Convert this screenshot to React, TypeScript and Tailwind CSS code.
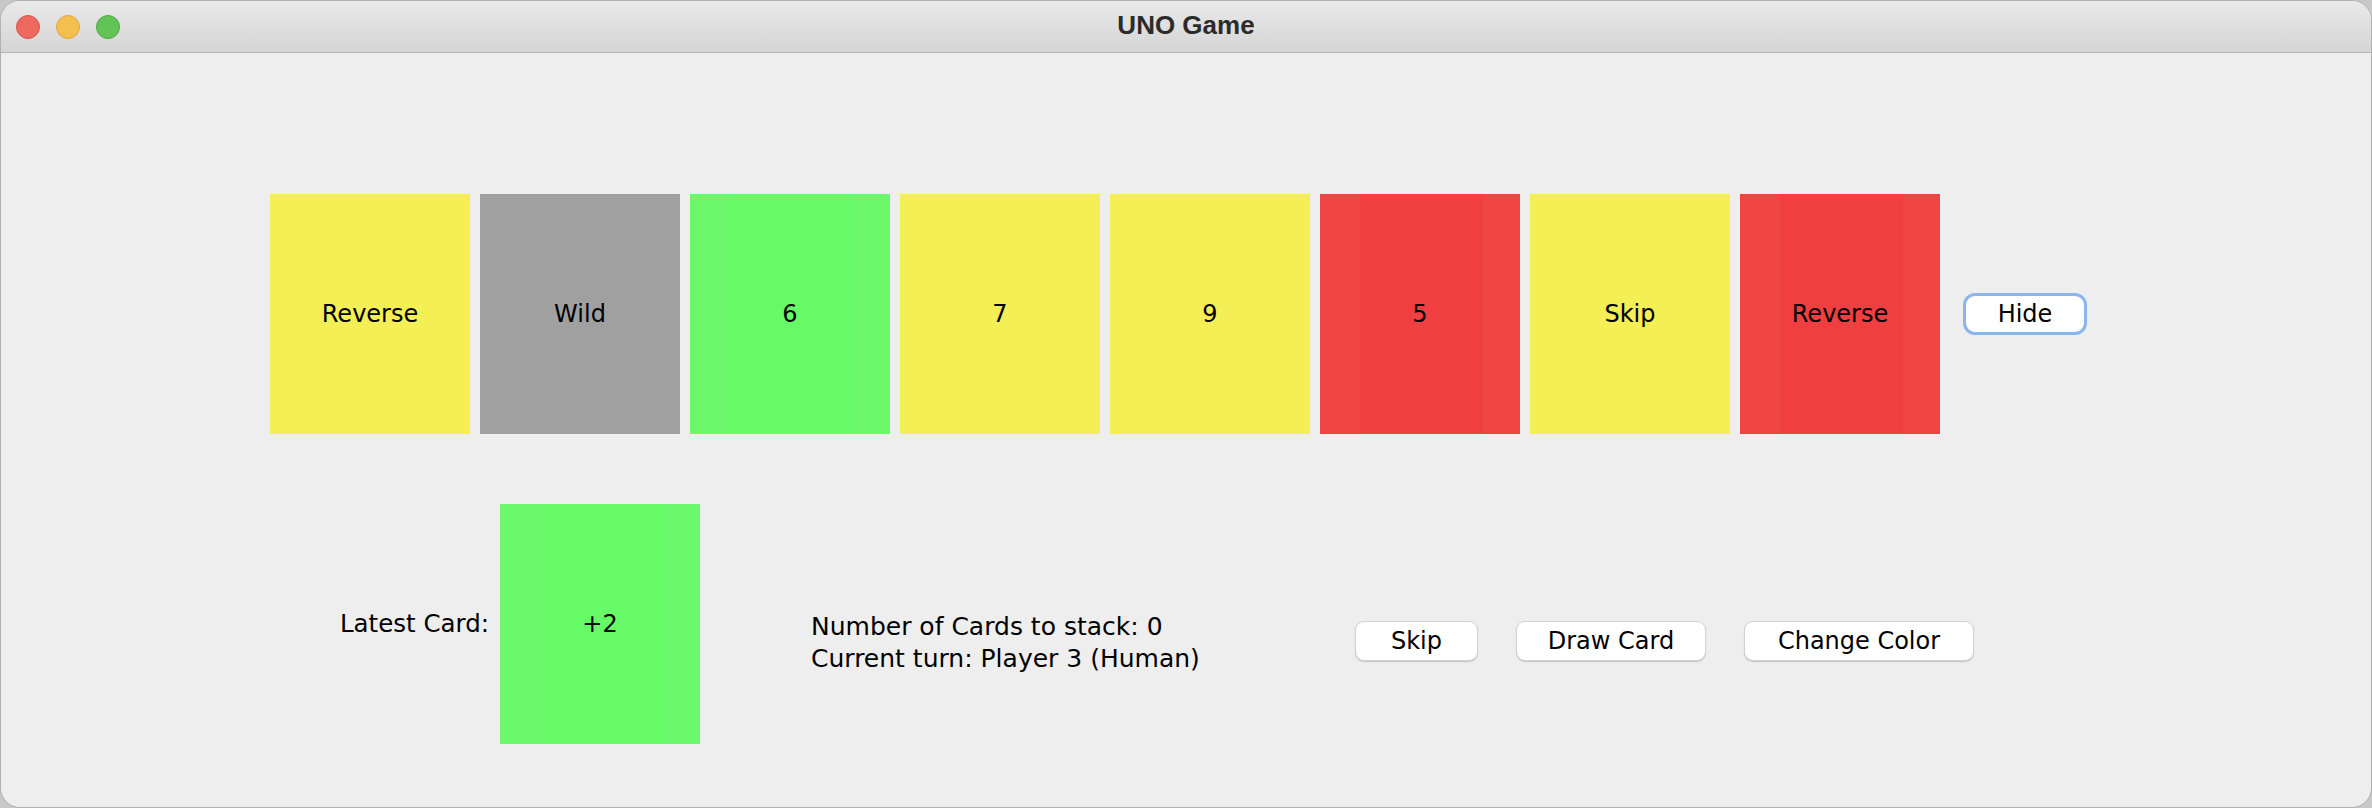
type Card = { label: string; color: string };

const hand: Card[] = [
  { label: "Reverse", color: "yellow" },
  { label: "Wild", color: "gray" },
  { label: "6", color: "green" },
  { label: "7", color: "yellow" },
  { label: "9", color: "yellow" },
  { label: "5", color: "red" },
  { label: "Skip", color: "yellow" },
  { label: "Reverse", color: "red" },
];

// aqua paints the coloured buttons with slightly lighter side bands
const cardBg: Record<string, string> = {
  yellow: "bg-[#f3ef55]",
  gray: "bg-[#a0a0a0]",
  green: "bg-[linear-gradient(90deg,#6bf96b_0_40px,#66fa66_40px_163px,#6bf96b_163px)]",
  red: "bg-[linear-gradient(90deg,#ef4545_0_40px,#ef3f40_40px_163px,#ef4545_163px)]",
};

function UnoCard({ card }: { card: Card }) {
  return (
    <div className={`w-[200px] h-[240px] flex items-center justify-center text-black ${cardBg[card.color]}`}>
      {card.label}
    </div>
  );
}

function AquaButton({ label, width }: { label: string; width: string }) {
  return (
    <button
      className={`${width} h-[40px] bg-white rounded-[9px] border border-[#d2d2d2] shadow-[0_1px_1px_rgba(0,0,0,0.18)] text-black flex items-center justify-center`}
    >
      {label}
    </button>
  );
}

export default function App() {
  return (
    <div className="w-full h-[808px] bg-[#c8c8c8]">
      <div className="w-full h-full rounded-[20px] overflow-hidden border border-[#b0b0b0] bg-[#eeeeee] flex flex-col font-['DejaVu_Sans',sans-serif] text-[24px]">
        {/* Title bar */}
        <div className="h-[52px] shrink-0 grid grid-cols-[1fr_auto_1fr] items-center border-b border-[#b3b3b3] bg-gradient-to-b from-[#e9e9e9] to-[#d5d5d5]">
          <div className="flex items-center gap-4 pl-[15px]">
            <div className="w-6 h-6 rounded-full bg-[#ee6a5f] border border-[#d4564c]"></div>
            <div className="w-6 h-6 rounded-full bg-[#f5bf4f] border border-[#d9a43f]"></div>
            <div className="w-6 h-6 rounded-full bg-[#61c454] border border-[#4fa644]"></div>
          </div>
          <div className="font-['Liberation_Sans',Arial,sans-serif] font-bold text-[26px] text-[#2b2b2b] pb-[3px]">
            UNO Game
          </div>
          <div></div>
        </div>

        {/* Hand */}
        <div className="flex items-center gap-[10px] pl-[269px] mt-[141px]">
          {hand.map((c, i) => (
            <UnoCard key={i} card={c} />
          ))}
          <button className="ml-[13px] w-[124px] h-[42px] bg-white rounded-[12px] border-[3px] border-[#8ab6ee] text-black flex items-center justify-center">
            Hide
          </button>
        </div>

        {/* Table */}
        <div className="flex items-start pl-[269px] mt-[70px]">
          <div className="w-[230px] h-[240px] flex items-center justify-end pr-[11px] text-black text-[24.5px]">
            Latest Card:
          </div>
          <UnoCard card={{ label: "+2", color: "green" }} />
          <div className="ml-[111px] w-[544px] mt-[107px] leading-[32px] text-black text-[25px]">
            <div>Number of Cards to stack: 0</div>
            <div>Current turn: Player 3 (Human)</div>
          </div>
          <div className="flex gap-[38px] mt-[117px]">
            <AquaButton label="Skip" width="w-[123px]" />
            <AquaButton label="Draw Card" width="w-[190px]" />
            <AquaButton label="Change Color" width="w-[230px]" />
          </div>
        </div>
      </div>
    </div>
  );
}
